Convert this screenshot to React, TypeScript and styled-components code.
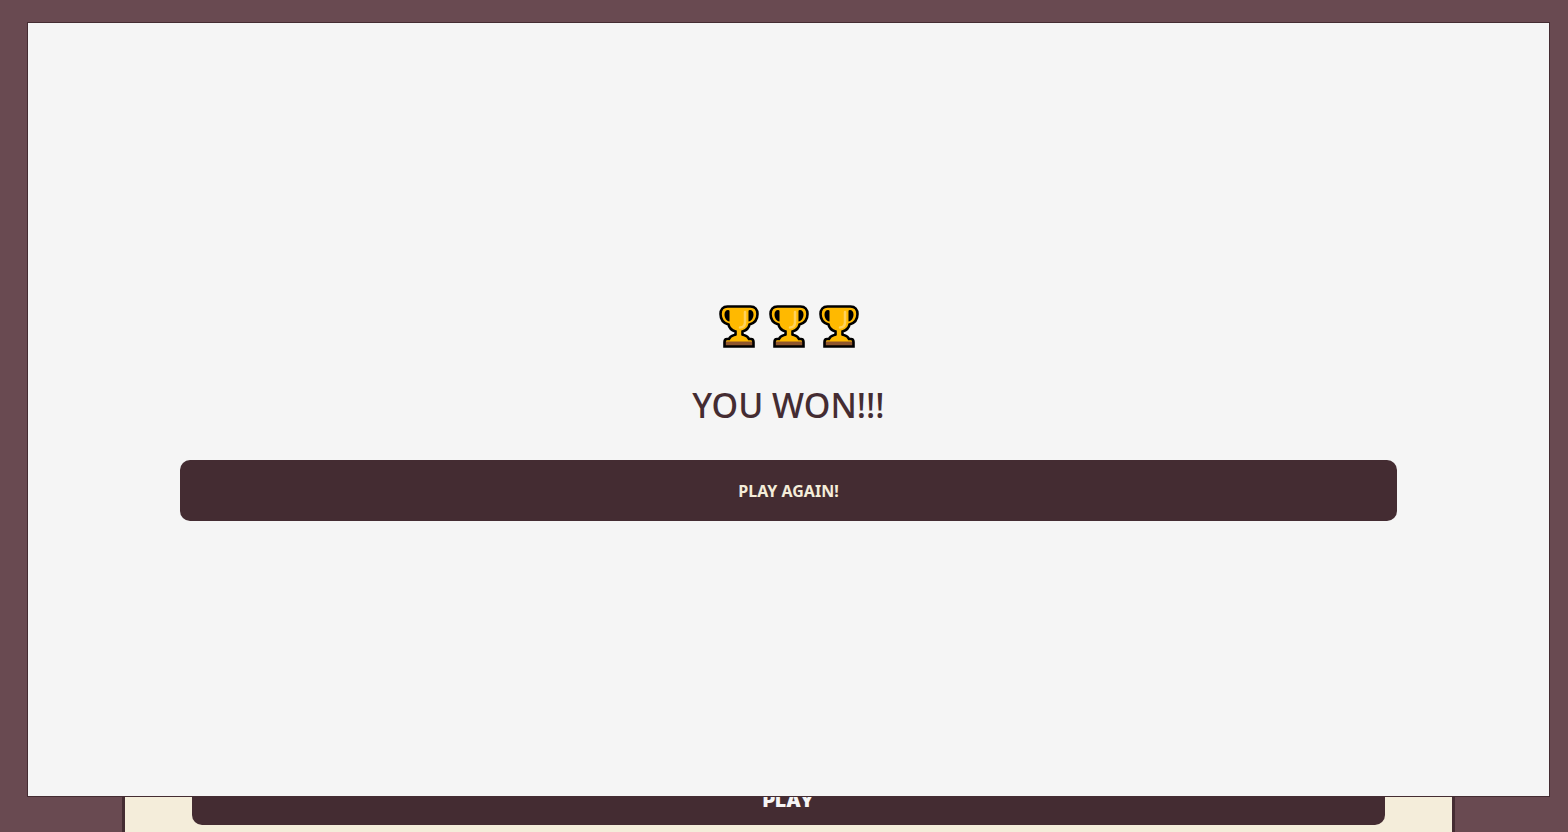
import React from 'react';
import styled, { createGlobalStyle } from 'styled-components';

const colors = {
  page: '#694a51',
  dark: '#442c32',
  cream: '#f4edda',
  panel: '#f5f5f5',
};

const GlobalStyle = createGlobalStyle`
  * { box-sizing: border-box; }
  html, body { margin: 0; background: ${colors.page}; }
  body { overflow: hidden; font-family: "Noto Sans", sans-serif; color: ${colors.dark}; }
`;

const Page = styled.div`
  display: flex;
  justify-content: center;
  min-height: 100vh;
  padding: 40px 0 0 9px;
`;

const Card = styled.main`
  display: flex;
  flex-direction: column;
  justify-content: flex-end;
  width: 85vw;
  padding: 0 67px 7px;
  border: 3px solid ${colors.dark};
  border-bottom: 0;
  background: ${colors.cream};
`;

const Button = styled.button`
  border: 0;
  border-radius: 10px;
  background: ${colors.dark};
  cursor: pointer;
`;

const PlayButton = styled(Button)`
  height: 48px;
  color: ${colors.panel};
  font: 900 19px/24px Inter, sans-serif;
`;

const AgainButton = styled(Button)`
  width: 80%;
  height: 61px;
  padding-top: 2px;
  color: ${colors.cream};
  font: 700 16px/24px "Noto Sans", sans-serif;
`;

const Overlay = styled.div`
  position: fixed;
  inset: 0;
  padding: 22px 18px 35px 27px;
`;

const Dialog = styled.section`
  display: flex;
  flex-direction: column;
  align-items: center;
  justify-content: center;
  height: 100%;
  padding-top: 6px;
  border: 1px solid ${colors.dark};
  background: ${colors.panel};
`;

const Trophies = styled.div`
  display: flex;
  gap: 10px;
`;

const TrophyIcon = styled.svg`
  display: block;
  width: 40px;
  height: 43px;
`;

const Message = styled.h1`
  margin: 33px 0 31px;
  font-size: 34px;
  line-height: 48px;
  font-weight: 500;
`;

const outline =
  'M8.5 1.5H31.5C36 1.5 38.5 4.5 38.5 9C38.500 14 36 18 30.5 19.5C30 22.5 28 25 23.5 26.5V29.5C25.5 30.5 28.500 30.500 30 34H32C34 34 34.5 35.5 34.5 37V41.5H5.5V37C5.5 35.5 6 34 8 34H10C11.500 30.500 14.500 30.500 16.5 29.5V26.5C12 25 10 22.5 9.5 19.5C4 18 1.5 14 1.5 9C1.5 4.5 4 1.5 8.5 1.5Z';

function Trophy() {
  return (
    <TrophyIcon viewBox="0 0 40 43" aria-hidden="true">
      <path d={outline} fill="#ffb900" />
      <path d="M5.5 36.5H34.5V41.5H5.5Z" fill="#8e562e" />
      <path d={outline} fill="none" stroke="#000" strokeWidth="2.6" strokeLinejoin="miter" />
      <path
        d="M10.5 6V16.5C7.5 16 5.5 13 5.5 9.5C5.5 6.5 7 5 9 5Q10.5 5 10.5 6ZM29.5 6V16.5C32.5 16 34.5 13 34.5 9.5C34.5 6.5 33 5 31 5Q29.5 5 29.5 6Z"
        fill="#000"
      />
      <path d="M26 7V17Q26 22.500 21 22.500" fill="none" stroke="#ffd15c" strokeWidth="2.500" strokeLinecap="round" />
    </TrophyIcon>
  );
}

export default function App() {
  return (
    <>
      <GlobalStyle />
      <Page>
        <Card>
          <PlayButton type="button">PLAY</PlayButton>
        </Card>
      </Page>
      <Overlay>
        <Dialog role="dialog" aria-modal="true" aria-labelledby="result">
          <Trophies>
            <Trophy />
            <Trophy />
            <Trophy />
          </Trophies>
          <Message id="result">YOU WON!!!</Message>
          <AgainButton type="button">PLAY AGAIN!</AgainButton>
        </Dialog>
      </Overlay>
    </>
  );
}
